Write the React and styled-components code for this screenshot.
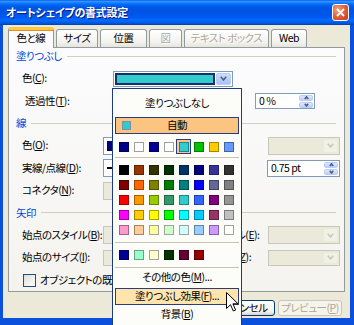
import React from "react";
import styled, { createGlobalStyle, css } from "styled-components";

const GlobalStyle = createGlobalStyle`
  html, body { margin: 0; padding: 0; background: #fff; }
  body {
    font-family: "Noto Sans CJK JP", "Noto Sans", sans-serif;
    font-size: 10.5px;
    font-feature-settings: "palt";
    color: #000;
  }
  * { box-sizing: border-box; }
  u { text-decoration: underline; text-underline-offset: 1px; }
`;

const FONT = `"Noto Sans CJK JP", "Noto Sans", sans-serif`;

const Window = styled.div`
  position: relative;
  width: 354px;
  height: 325px;
  overflow: hidden;
  display: flex;
  flex-direction: column;
  background: #0B50DC;
  font-family: ${FONT};
  font-size: 10.5px;
  font-feature-settings: "palt";
  letter-spacing: -0.5px;
  line-height: 1.2;
`;

const TitleBar = styled.div`
  height: 25px;
  flex: none;
  display: flex;
  align-items: center;
  padding: 0 5px 0 6px;
  background: linear-gradient(
    to bottom,
    #0058ee 0%, #3593ff 5%, #288eff 8%, #127dff 12%, #036ffc 16%,
    #0262ee 22%, #0057e5 30%, #0054e3 40%, #0055eb 60%, #005bf5 70%,
    #026afe 80%, #0062ef 88%, #0052d6 94%, #0040ab 100%
  );
`;

const Title = styled.span`
  flex: 1;
  color: #fff;
  font-weight: bold;
  font-size: 11px;
  letter-spacing: -0.25px;
  text-shadow: 1px 1px 0 #0a1883;
  white-space: nowrap;
`;

const CloseButton = styled.div`
  width: 17px;
  height: 17px;
  border: 1px solid #fff;
  border-radius: 3px;
  background: radial-gradient(circle at 30% 30%, #f1a588 0%, #e2643c 45%, #c2391a 100%);
  display: flex;
  align-items: center;
  justify-content: center;
`;

const Body = styled.div`
  flex: none;
  height: 293px;
  margin: 0 4px 0 3px;
  background: #ece9d8;
  padding: 2px 0 0 5px;
  display: flex;
  flex-direction: column;
`;

const TabStrip = styled.div`
  height: 20px;
  display: flex;
  align-items: flex-end;
  gap: 2px;
  position: relative;
  z-index: 1;
`;

const Tab = styled.div`
  width: ${(p) => p.$w}px;
  height: 18px;
  border: 1px solid #919b9c;
  border-bottom: none;
  border-radius: 3px 3px 0 0;
  background: linear-gradient(#ffffff, #f3f2ed 70%, #e6e4dc);
  display: flex;
  align-items: center;
  justify-content: center;
  white-space: nowrap;
  color: ${(p) => (p.$disabled ? "#aca899" : "#000")};
  text-shadow: ${(p) => (p.$disabled ? "1px 1px 0 #fff" : "none")};
  ${(p) =>
    p.$active &&
    css`
      height: 21px;
      margin-bottom: -1px;
      background: #fcfcfe;
      border-top: 3px solid #ffc83c;
      box-shadow: inset 0 1px 0 #e68b2c;
      padding-bottom: 2px;
    `}
`;

const Panel = styled.div`
  width: 337px;
  height: 245px;
  border: 1px solid #919b9c;
  background: linear-gradient(#fcfcfe, #f4f3ee);
  overflow: hidden;
`;

const Rows = styled.div`
  display: grid;
  grid-auto-rows: 22.4px;
  margin-top: -3px;
`;

const Header = styled.div`
  display: flex;
  align-items: center;
  gap: 5px;
  padding: 0 8px 0 7px;
  color: #0046d5;
  &::after {
    content: "";
    flex: 1;
    height: 1px;
    background: #d0d0bf;
  }
`;

const Row = styled.div`
  display: flex;
  align-items: center;
  padding-left: 13px;
`;

const Label = styled.span`
  width: ${(p) => p.$w}px;
  flex: none;
  white-space: nowrap;
  padding-left: ${(p) => p.$indent || 0}px;
`;

const Spacer = styled.div`
  width: ${(p) => p.$w}px;
  flex: none;
`;

const Combo = styled.div`
  width: ${(p) => p.$w}px;
  height: ${(p) => p.$h || 18}px;
  flex: none;
  border: 1px solid ${(p) => (p.$disabled ? "#c9c7ba" : "#7f9db9")};
  background: ${(p) => (p.$disabled ? "#ebe9da" : "#fff")};
  display: flex;
  padding: 1px;
  gap: 1px;
`;

const ComboValue = styled.div`
  flex: 1;
  display: flex;
  align-items: center;
  padding: 0 2px;
`;

const FillSwatch = styled.div`
  flex: 1;
  border: 2px solid #1c2c6c;
  background: #33cccc;
`;

const LineColor = styled.div`
  width: 100%;
  height: 10px;
  background: #000080;
  border: 1px solid #000050;
`;

const LineStyle = styled.div`
  width: 100%;
  height: 2px;
  background: #000;
`;

const DropButton = styled.div`
  width: 15px;
  flex: none;
  border-radius: 2px;
  display: flex;
  align-items: center;
  justify-content: center;
  border: 1px solid ${(p) => (p.$disabled ? "#ebe9da" : "#b9cdf7")};
  background: ${(p) =>
    p.$disabled
      ? "#f2f1e8"
      : p.$hot
      ? "linear-gradient(#cddcfc, #a9c2f4)"
      : "linear-gradient(#e0e8fd, #bccff8)"};
`;

const Spin = styled.div`
  width: ${(p) => p.$w}px;
  height: ${(p) => p.$h || 16}px;
  flex: none;
  border: 1px solid #7f9db9;
  background: #fff;
  display: flex;
  padding: 1px;
`;

const SpinText = styled.div`
  flex: 1;
  display: flex;
  align-items: center;
  padding-left: 2px;
`;

const SpinButtons = styled.div`
  width: 14px;
  flex: none;
  display: flex;
  flex-direction: column;
  gap: 1px;
`;

const SpinHalf = styled.div`
  flex: 1;
  border-radius: 2px;
  border: 1px solid #b9cdf7;
  background: linear-gradient(#e0e8fd, #bccff8);
  display: flex;
  align-items: center;
  justify-content: center;
`;

const CheckRow = styled(Row)`
  gap: 4px;
`;

const CheckBox = styled.div`
  width: 13px;
  height: 13px;
  margin-left: 1px;
  border: 1px solid #1c5180;
  background: linear-gradient(135deg, #dcdcd7, #ffffff);
  flex: none;
`;

const ButtonRow = styled.div`
  margin-top: 8px;
  display: flex;
  justify-content: flex-end;
  gap: 3px;
  padding-right: 8px;
`;

const Button = styled.div`
  width: ${(p) => p.$w}px;
  height: 16px;
  border: 1px solid ${(p) => (p.$disabled ? "#c9c7ba" : "#003c74")};
  border-radius: 3px;
  background: ${(p) =>
    p.$disabled ? "#f5f4ea" : "linear-gradient(#ffffff, #f4f3ee 75%, #d8d2c6)"};
  color: ${(p) => (p.$disabled ? "#aca899" : "#000")};
  display: flex;
  align-items: center;
  justify-content: center;
  white-space: nowrap;
`;

/* Popup */
const Popup = styled.div`
  position: absolute;
  left: 112px;
  top: 88px;
  width: 130px;
  height: 250px;
  border: 1px solid #1f3a87;
  background: #fcfcf9;
  padding: 3px 1px;
  display: flex;
  flex-direction: column;
  z-index: 5;
`;

const MenuText = styled.div`
  height: ${(p) => p.$h}px;
  flex: none;
  display: flex;
  align-items: center;
  justify-content: center;
  white-space: nowrap;
`;

const MenuHot = styled.div`
  height: 17px;
  flex: none;
  margin: ${(p) => p.$mt || 0}px 1px 0;
  border: 1px solid #2b3c83;
  background: ${(p) => p.$bg};
  display: flex;
  align-items: center;
  justify-content: center;
  position: relative;
  white-space: nowrap;
`;

const AutoSwatch = styled.div`
  position: absolute;
  left: 6px;
  top: 3px;
  width: 9px;
  height: 9px;
  background: #33cccc;
  border: 1px solid #7b8fa8;
`;

const SwatchRow = styled.div`
  display: flex;
  height: 15px;
  flex: none;
  margin-top: ${(p) => p.$mt || 0}px;
  padding-left: 2px;
`;

const Cell = styled.div`
  width: 15px;
  height: 15px;
  flex: none;
  display: flex;
  align-items: center;
  justify-content: center;
  ${(p) =>
    p.$selected &&
    css`
      border: 1px solid #2b3c83;
      background: #ffc480;
    `}
`;

const Swatch = styled.div`
  width: 10px;
  height: 10px;
  border: 1px solid ${(p) => (p.$light ? "#a3a39c" : "rgba(0,0,0,0.35)")};
  background: ${(p) => p.$c};
`;

const Separator = styled.div`
  height: 1px;
  flex: none;
  background: #c5c2b2;
  margin: ${(p) => p.$mt || 0}px 1px 0;
`;

const Cursor = styled.svg`
  position: absolute;
  left: 226px;
  top: 292px;
  z-index: 10;
`;

const Chevron = ({ color = "#4d6185", w = 7, h = 4, up }) => (
  <svg width={w} height={h + 1} viewBox={`0 0 ${w} ${h + 1}`}>
    <polyline
      points={
        up
          ? `0.8,${h} ${w / 2},0.8 ${w - 0.8},${h}`
          : `0.8,0.8 ${w / 2},${h} ${w - 0.8},0.8`
      }
      fill="none"
      stroke={color}
      strokeWidth="1.6"
    />
  </svg>
);

const Drop = ({ disabled, hot }) => (
  <DropButton $disabled={disabled} $hot={hot}>
    <Chevron color={disabled ? "#c9c7ba" : "#4d6185"} />
  </DropButton>
);

const SpinBox = ({ w, h, value }) => (
  <Spin $w={w} $h={h}>
    <SpinText>{value}</SpinText>
    <SpinButtons>
      <SpinHalf>
        <Chevron up w={5} h={3} />
      </SpinHalf>
      <SpinHalf>
        <Chevron w={5} h={3} />
      </SpinHalf>
    </SpinButtons>
  </Spin>
);

const light = (c) => ["#FFFFFF", "#FFFFCC", "#FFFF99", "#CCFFCC", "#CCFFFF"].includes(c);

const row1 = ["#00008B", "#FFFFFF", "#000099", "#FFFFFF", "#33CCCC", "#00C000", "#FFCC00", "#6699FF"];
const grid = [
  ["#000000", "#993300", "#333300", "#003300", "#003366", "#000080", "#333399", "#333333"],
  ["#800000", "#FF6600", "#808000", "#008000", "#008080", "#0000FF", "#666699", "#808080"],
  ["#FF0000", "#FF9900", "#99CC00", "#339966", "#33CCCC", "#3366FF", "#800080", "#969696"],
  ["#FF00FF", "#FFCC00", "#FFFF00", "#00FF00", "#00FFFF", "#00CCFF", "#993366", "#C0C0C0"],
  ["#FF99CC", "#FFCC99", "#FFFF99", "#CCFFCC", "#CCFFFF", "#99CCFF", "#CC99FF", "#FFFFFF"],
];
const recent = ["#000099", "#99FFCC", "#FFFFCC", "#003300", "#660033", "#990000"];

const tabs = [
  { label: "色と線", w: 46, active: true },
  { label: "サイズ", w: 42 },
  { label: "位置", w: 47 },
  { label: "図", w: 33, disabled: true },
  { label: "テキスト ボックス", w: 85, disabled: true },
  { label: "Web", w: 36 },
];

export default function App() {
  return (
    <>
      <GlobalStyle />
      <Window>
        <TitleBar>
          <Title>オートシェイプの書式設定</Title>
          <CloseButton>
            <svg width="9" height="9" viewBox="0 0 9 9">
              <path d="M1 1 L8 8 M8 1 L1 8" stroke="#fff" strokeWidth="1.8" />
            </svg>
          </CloseButton>
        </TitleBar>
        <Body>
          <TabStrip>
            {tabs.map((t) => (
              <Tab key={t.label} $w={t.w} $active={t.active} $disabled={t.disabled}>
                {t.label}
              </Tab>
            ))}
          </TabStrip>
          <Panel>
            <Rows>
              <Header>塗りつぶし</Header>
              <Row>
                <Label $w={91}>
                  色(<u>C</u>):
                </Label>
                <Combo $w={120} $h={16}>
                  <FillSwatch />
                  <Drop hot />
                </Combo>
              </Row>
              <Row>
                <Label $w={91} $indent={3}>
                  透過性(<u>T</u>):
                </Label>
                <Spacer $w={142} />
                <SpinBox w={60} value="0 %" />
              </Row>
              <Header>線</Header>
              <Row>
                <Label $w={81}>
                  色(<u>O</u>):
                </Label>
                <Combo $w={72}>
                  <ComboValue>
                    <LineColor />
                  </ComboValue>
                  <Drop />
                </Combo>
                <Label $w={93} $indent={5}>
                  スタイル(<u>S</u>):
                </Label>
                <Combo $w={72} $disabled>
                  <ComboValue />
                  <Drop disabled />
                </Combo>
              </Row>
              <Row>
                <Label $w={81}>
                  実線/点線(<u>D</u>):
                </Label>
                <Combo $w={72}>
                  <ComboValue>
                    <LineStyle />
                  </ComboValue>
                  <Drop />
                </Combo>
                <Label $w={92} $indent={5}>
                  太さ(<u>W</u>):
                </Label>
                <SpinBox w={73} h={17} value="0.75 pt" />
              </Row>
              <Row>
                <Label $w={81}>
                  コネクタ(<u>N</u>):
                </Label>
                <Combo $w={72} $disabled>
                  <ComboValue />
                  <Drop disabled />
                </Combo>
              </Row>
              <Header>矢印</Header>
              <Row>
                <Label $w={81}>
                  始点のスタイル(<u>B</u>):
                </Label>
                <Combo $w={72} $disabled>
                  <ComboValue />
                  <Drop disabled />
                </Combo>
                <Label $w={93} $indent={5}>
                  終点のスタイル(<u>E</u>):
                </Label>
                <Combo $w={72} $disabled>
                  <ComboValue />
                  <Drop disabled />
                </Combo>
              </Row>
              <Row>
                <Label $w={81}>
                  始点のサイズ(<u>I</u>):
                </Label>
                <Combo $w={72} $disabled $h={16}>
                  <ComboValue />
                  <Drop disabled />
                </Combo>
                <Label $w={93} $indent={5}>
                  終点のサイズ(<u>Z</u>):
                </Label>
                <Combo $w={72} $disabled $h={16}>
                  <ComboValue />
                  <Drop disabled />
                </Combo>
              </Row>
              <CheckRow>
                <CheckBox />
                <span>
                  オブジェクトの既定値に設定する(<u>A</u>)
                </span>
              </CheckRow>
            </Rows>
          </Panel>
          <ButtonRow>
            <Button $w={60}>OK</Button>
            <Button $w={60}>キャンセル</Button>
            <Button $w={64} $disabled>
              プレビュー(<u>P</u>)
            </Button>
          </ButtonRow>
        </Body>

        <Popup>
          <MenuText $h={22}>塗りつぶしなし</MenuText>
          <MenuHot $mt={3} $bg="#fbc480">
            <AutoSwatch />
            自動
          </MenuHot>
          <SwatchRow $mt={5}>
            {row1.map((c, i) => (
              <Cell key={i} $selected={i === 4}>
                <Swatch $c={c} $light={light(c)} />
              </Cell>
            ))}
          </SwatchRow>
          <Separator $mt={3} />
          {grid.map((r, ri) => (
            <SwatchRow key={ri} $mt={ri === 0 ? 4 : 0.2}>
              {r.map((c, i) => (
                <Cell key={i}>
                  <Swatch $c={c} $light={light(c)} />
                </Cell>
              ))}
            </SwatchRow>
          ))}
          <Separator $mt={4} />
          <SwatchRow $mt={5}>
            {recent.map((c, i) => (
              <Cell key={i}>
                <Swatch $c={c} $light={light(c)} />
              </Cell>
            ))}
          </SwatchRow>
          <Separator $mt={4} />
          <MenuText $h={20}>
            その他の色(<u>M</u>)...
          </MenuText>
          <MenuHot $bg="#ffe5ad">
            塗りつぶし効果(<u>F</u>)...
          </MenuHot>
          <MenuText $h={20}>
            背景(<u>B</u>)
          </MenuText>
        </Popup>

        <Cursor width="13" height="21" viewBox="0 0 13 21">
          <path
            d="M0.5 0.5 L0.5 16.5 L4.5 12.7 L7.3 19 L9.6 18 L6.9 11.8 L12 11.8 Z"
            fill="#fff"
            stroke="#000"
            strokeWidth="1"
            strokeLinejoin="miter"
          />
        </Cursor>
      </Window>
    </>
  );
}
